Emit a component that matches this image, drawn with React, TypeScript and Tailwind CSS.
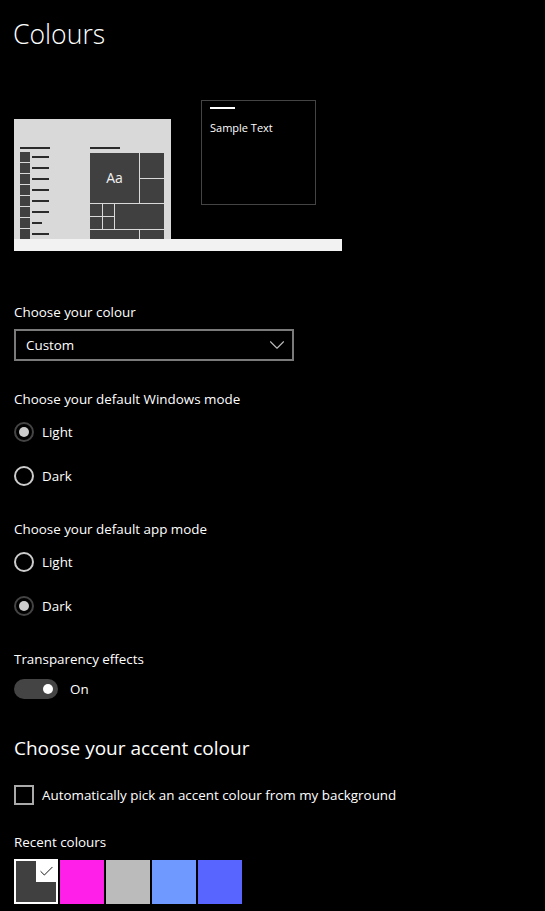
import React from "react";
import { Check, ChevronDown } from "lucide-react";

const Radio = ({ label, checked }: { label: string; checked?: boolean }) => (
  <div className="flex items-center h-5 gap-2">
    {checked ? (
      <span className="w-5 h-5 rounded-full border-2 border-[#444444] flex items-center justify-center">
        <span className="w-[10px] h-[10px] rounded-full bg-[#cccccc]" />
      </span>
    ) : (
      <span className="w-5 h-5 rounded-full border-2 border-[#cccccc]" />
    )}
    <span className="text-[13.4px] text-white">{label}</span>
  </div>
);

const MenuRow = ({ short }: { short?: boolean }) => (
  <div className="flex items-center gap-[2px] h-[10px] shrink-0">
    <div className="w-[10px] h-[10px] bg-[#404040]" />
    <div className={`h-[2px] bg-[#2b2b2b] ${short ? "w-[10px]" : "w-[17px]"}`} />
  </div>
);

const Preview = () => (
  <div className="mt-[48px]">
    <div className="flex h-[139px]">
      {/* start menu */}
      <div className="self-end w-[157px] h-[120px] bg-[#d9d9d9] overflow-hidden flex pl-[6px] pt-[28px]">
        <div className="w-[70px] flex flex-col">
          <div className="w-[30px] h-[2px] shrink-0 bg-[#2b2b2b]" />
          <div className="mt-[3px] flex flex-col gap-[1px]">
            <MenuRow />
            <MenuRow />
            <MenuRow />
            <MenuRow />
            <MenuRow />
            <MenuRow />
            <MenuRow short />
            <MenuRow />
          </div>
        </div>
        <div className="flex flex-col">
          <div className="w-[30px] h-[2px] shrink-0 bg-[#2b2b2b]" />
          <div className="mt-[4px] shrink-0 grid grid-cols-[49px_24px] gap-[1px] text-[#f2f2f2]">
            <div className="row-span-2 h-[50px] bg-[#404040] flex items-center justify-center text-sm">Aa</div>
            <div className="bg-[#404040]" />
            <div className="bg-[#404040]" />
            <div className="col-span-2 flex gap-[1px] h-[25px]">
              <div className="grid grid-cols-2 grid-rows-2 gap-[1px] w-[24px]">
                <div className="bg-[#404040]" />
                <div className="bg-[#404040]" />
                <div className="bg-[#404040]" />
                <div className="bg-[#404040]" />
              </div>
              <div className="flex-1 bg-[#404040]" />
            </div>
            <div className="h-[10px] bg-[#404040]" />
            <div className="h-[10px] bg-[#404040]" />
          </div>
        </div>
      </div>
      {/* window */}
      <div className="ml-[30px] self-start w-[115px] h-[105px] border border-[#444444] px-2 pt-[6px]">
        <div className="w-[25px] h-[2px] bg-white" />
        <div className="mt-[11px] text-[11px] leading-4 text-white">Sample Text</div>
      </div>
    </div>
    <div className="w-[328px] h-3 bg-[#f2f2f2]" />
  </div>
);

const swatches = ["bg-[#ff1fe8]", "bg-[#bbbbbb]", "bg-[#7099ff]", "bg-[#5865ff]"];

export default function App() {
  return (
    <div
      className="w-[545px] h-[911px] overflow-hidden bg-black text-white pl-[14px]"
      style={{ fontFamily: '"Open Sans", "Noto Sans", sans-serif' }}
    >
      <h1 className="pt-[16px] -ml-px text-[26.6px] leading-[36px] font-light">Colours</h1>
      <Preview />

      <div className="mt-[51px] text-[13.4px] leading-5">Choose your colour</div>
      <div className="mt-[7px] w-[280px] h-8 border-2 border-[#7a7a7a] flex items-center justify-between pl-[10px] pr-[2px] text-[13.4px]">
        <span>Custom</span>
        <ChevronDown className="w-[26px] h-[26px] text-[#bbbbbb]" strokeWidth={1} />
      </div>

      <div className="mt-[28px] text-[13.4px] leading-5">Choose your default Windows mode</div>
      <div className="mt-[13px] flex flex-col gap-6">
        <Radio label="Light" checked />
        <Radio label="Dark" />
      </div>

      <div className="mt-[33px] text-[13.4px] leading-5">Choose your default app mode</div>
      <div className="mt-[13px] flex flex-col gap-6">
        <Radio label="Light" />
        <Radio label="Dark" checked />
      </div>

      <div className="mt-[33px] text-[13.4px] leading-5">Transparency effects</div>
      <div className="mt-[10px] flex items-center gap-3">
        <div className="w-11 h-5 rounded-full bg-[#444444] flex items-center justify-end pr-[5px]">
          <span className="w-[10px] h-[10px] rounded-full bg-white" />
        </div>
        <span className="text-[13.4px]">On</span>
      </div>

      <h2 className="mt-[35px] text-[19px] leading-7">Choose your accent colour</h2>

      <div className="mt-[23px] flex items-center gap-2 h-5">
        <span className="w-5 h-5 border-2 border-[#aaaaaa]" />
        <span className="text-[13.4px]">Automatically pick an accent colour from my background</span>
      </div>

      <div className="mt-[27px] text-[13.4px] leading-5">Recent colours</div>
      <div className="mt-[7px] flex items-end gap-[2px]">
        <div className="w-[44px] h-[45px] border-2 border-white bg-[#404040] flex justify-end items-start">
          <div className="w-5 h-[21px] bg-white flex items-center justify-center">
            <Check className="w-[17px] h-[17px] text-black" strokeWidth={1.25} />
          </div>
        </div>
        {swatches.map((c) => (
          <div key={c} className={`w-[44px] h-[44px] ${c}`} />
        ))}
      </div>
    </div>
  );
}
